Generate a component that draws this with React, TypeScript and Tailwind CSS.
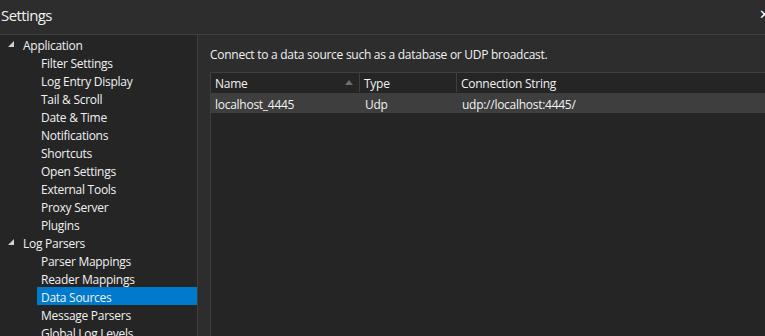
import React from "react";

const font = { fontFamily: '"Open Sans", "Noto Sans", sans-serif', letterSpacing: "-0.27px" };

type Item = { label: string; level: 0 | 1; selected?: boolean };

const items: Item[] = [
  { label: "Application", level: 0 },
  { label: "Filter Settings", level: 1 },
  { label: "Log Entry Display", level: 1 },
  { label: "Tail & Scroll", level: 1 },
  { label: "Date & Time", level: 1 },
  { label: "Notifications", level: 1 },
  { label: "Shortcuts", level: 1 },
  { label: "Open Settings", level: 1 },
  { label: "External Tools", level: 1 },
  { label: "Proxy Server", level: 1 },
  { label: "Plugins", level: 1 },
  { label: "Log Parsers", level: 0 },
  { label: "Parser Mappings", level: 1 },
  { label: "Reader Mappings", level: 1 },
  { label: "Data Sources", level: 1, selected: true },
  { label: "Message Parsers", level: 1 },
  { label: "Global Log Levels", level: 1 },
];

function Expander() {
  return (
    <svg width="6" height="6" viewBox="0 0 6 6" className="shrink-0">
      <polygon points="6,0 6,6 0,6" fill="#d0d0d0" />
    </svg>
  );
}

export default function App() {
  return (
    <div
      className="w-[765px] h-[336px] overflow-hidden bg-[#2d2d2d] text-[#f1f1f1] flex flex-col text-[12px]"
      style={font}
    >
      <div className="h-[35px] shrink-0 flex items-center justify-between border-b border-[#3f3f3f] pb-[4px]">
        <span className="pl-[1px] text-[15px] text-[#f1f1f1] leading-none tracking-[-0.6px]">Settings</span>
        <span className="text-[13px] mr-[-5px] text-white">✕</span>
      </div>
      <div className="flex flex-1 min-h-0">
        <div className="w-[198px] shrink-0 bg-[#252526] border-r border-[#3f3f3f] flex flex-col">
          {items.map((it) =>
            it.level === 0 ? (
              <div key={it.label} className="h-[18px] shrink-0 flex items-center">
                <div className="w-[23px] flex items-center justify-start pl-[8px]">
                  <Expander />
                </div>
                <span className="leading-none pt-[3px]">{it.label}</span>
              </div>
            ) : (
              <div key={it.label} className="h-[18px] shrink-0 flex items-center pl-[37px]">
                <div
                  className={
                    "h-full flex-1 flex items-center pl-[4px] pt-[3px] " +
                    (it.selected ? "bg-[#007acc]" : "")
                  }
                >
                  <span className="leading-none">{it.label}</span>
                </div>
              </div>
            )
          )}
        </div>
        <div className="flex-1 flex flex-col pl-[12px] pt-[10px]">
          <div className="h-[18px] flex items-center leading-none pt-[2px]">
            Connect to a data source such as a database or UDP broadcast.
          </div>
          <div className="mt-[9px] flex-1 bg-[#252526] border-l border-t border-[#3f3f3f] flex flex-col">
            <div className="h-[20px] flex items-stretch border-b border-[#252526]">
              <div className="w-[149px] flex items-center justify-between pl-[4px] pr-[6px] border-r border-[#3f3f3f]">
                <span className="leading-none pt-[2px]">Name</span>
                <svg width="8" height="5" viewBox="0 0 8 5">
                  <polygon points="4,0 8,5 0,5" fill="#6e6e6e" />
                </svg>
              </div>
              <div className="w-[97px] flex items-center pl-[4px] border-r border-[#3f3f3f]">
                <span className="leading-none pt-[2px]">Type</span>
              </div>
              <div className="flex-1 flex items-center pl-[4px]">
                <span className="leading-none pt-[2px]">Connection String</span>
              </div>
            </div>
            <div className="h-[20px] flex items-center bg-[#3e3e3e] pt-[3px]">
              <div className="w-[150px] pl-[4px] leading-none">localhost_4445</div>
              <div className="w-[97px] pl-[4px] leading-none">Udp</div>
              <div className="flex-1 pl-[4px] leading-none">udp://localhost:4445/</div>
            </div>
          </div>
        </div>
      </div>
    </div>
  );
}
